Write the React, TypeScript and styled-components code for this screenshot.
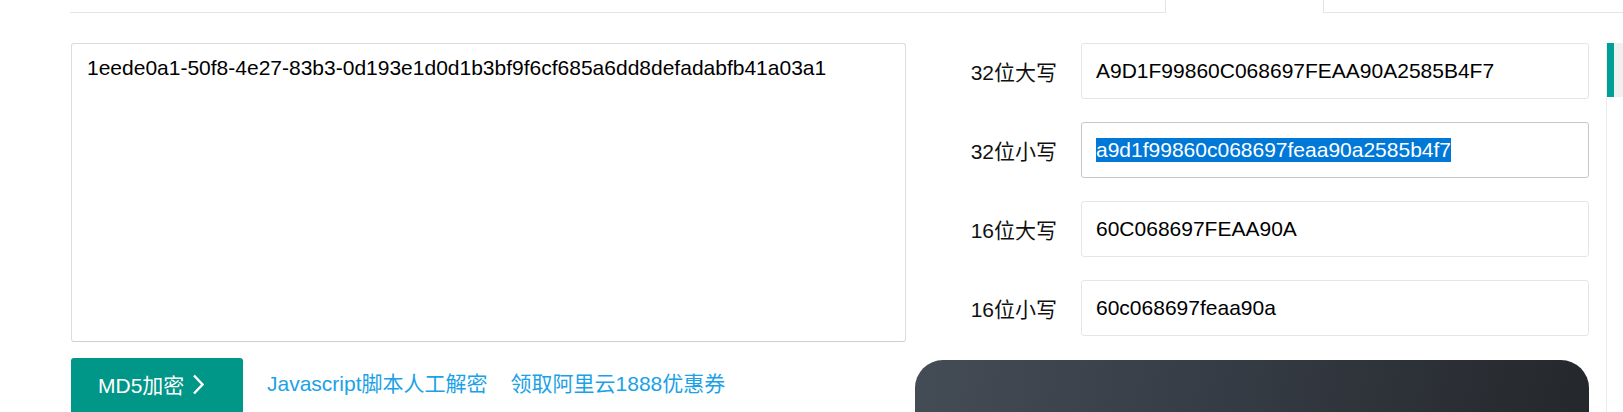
import styled, { createGlobalStyle } from "styled-components";

const GlobalStyle = createGlobalStyle`
  html, body {
    margin: 0;
    padding: 0;
    background: #fff;
    overflow: hidden;
  }
  body {
    font-family: "Liberation Sans", "Noto Sans CJK SC", sans-serif;
    color: #111;
  }
`;

const Page = styled.div`
  width: 1623px;
  height: 412px;
  overflow: hidden;
`;

const TabStrip = styled.div`
  display: flex;
  height: 13px;
`;
const TabBox = styled.div<{ $side: "left" | "right" }>`
  box-sizing: border-box;
  height: 13px;
  border-bottom: 1px solid #e4e4e4;
  ${(p) =>
    p.$side === "left"
      ? "width: 1096px; margin-left: 70px; border-right: 1px solid #e4e4e4;"
      : "flex: 1; border-left: 1px solid #e4e4e4;"}
`;
const ActiveTab = styled.div`
  width: 157px;
`;

const Main = styled.div`
  display: flex;
  padding-top: 30px;
`;

const LeftCol = styled.div`
  width: 835px;
  margin-left: 71px;
`;
const Source = styled.div`
  box-sizing: border-box;
  height: 299px;
  border: 1px solid #dcdcdc;
  border-bottom-color: #cfcfcf;
  border-radius: 3px;
  padding: 8px 15px;
  font-size: 21px;
  line-height: 31px;
  color: #000;
`;
const Actions = styled.div`
  display: flex;
  align-items: flex-start;
  margin-top: 16px;
`;
const EncryptBtn = styled.button`
  box-sizing: border-box;
  display: flex;
  align-items: center;
  width: 172px;
  height: 56px;
  padding: 0 0 4px 27px;
  border: none;
  border-radius: 3px 3px 0 0;
  background: #009688;
  color: #fff;
  font-family: inherit;
  font-size: 21px;
  cursor: pointer;
  svg {
    margin-left: 8px;
  }
`;
const LinkRow = styled.div`
  display: flex;
  gap: 23px;
  margin-left: 24px;
`;
const Link = styled.a`
  font-size: 21px;
  line-height: 52px;
  color: #1ba2e6;
  text-decoration: none;
`;

const RightCol = styled.div`
  width: 674px;
  margin-left: 9px;
  display: flex;
  flex-direction: column;
  gap: 23px;
`;
const Row = styled.div`
  display: flex;
  align-items: center;
  height: 56px;
`;
const Label = styled.div`
  width: 142px;
  text-align: right;
  font-size: 21px;
  color: #111;
`;
const Field = styled.div<{ $focus?: boolean }>`
  box-sizing: border-box;
  flex: 1;
  height: 56px;
  margin-left: 24px;
  display: flex;
  align-items: center;
  padding-left: 14px;
  border: 1px solid ${(p) => (p.$focus ? "#c6c6c6" : "#e6e6e6")};
  border-radius: 3px;
  font-size: 21px;
  color: #000;
`;
const Selected = styled.span`
  background: #0078d7;
  color: #fff;
`;
const AdCard = styled.div`
  margin-top: 1px;
  height: 80px;
  border-radius: 28px 28px 0 0;
  background: linear-gradient(100deg, #444c56 0%, #363c45 45%, #24272b 100%);
`;

const SideRail = styled.div`
  flex: 1;
  margin-left: 17px;
  height: 400px;
  border-left: 1px solid #ececec;
  display: flex;
  align-items: flex-start;
`;
const RailTrack = styled.div`
  flex: 1;
  height: 54px;
  background: #f0f0f0;
  border-left: 7px solid #00a096;
`;

const results = [
  { label: "32位大写", value: "A9D1F99860C068697FEAA90A2585B4F7" },
  { label: "32位小写", value: "a9d1f99860c068697feaa90a2585b4f7", focus: true },
  { label: "16位大写", value: "60C068697FEAA90A" },
  { label: "16位小写", value: "60c068697feaa90a" },
];

function Chevron() {
  return (
    <svg width="12" height="21" viewBox="0 0 12 21" fill="none">
      <polyline points="2,1.5 10.5,10.5 2,19.5" stroke="#fff" strokeWidth="2.4" />
    </svg>
  );
}

export default function App() {
  return (
    <Page>
      <GlobalStyle />
      <TabStrip>
        <TabBox $side="left" />
        <ActiveTab />
        <TabBox $side="right" />
      </TabStrip>
      <Main>
        <LeftCol>
          <Source>1eede0a1-50f8-4e27-83b3-0d193e1d0d1b3bf9f6cf685a6dd8defadabfb41a03a1</Source>
          <Actions>
            <EncryptBtn>
              MD5加密
              <Chevron />
            </EncryptBtn>
            <LinkRow>
              <Link href="#">Javascript脚本人工解密</Link>
              <Link href="#">领取阿里云1888优惠券</Link>
            </LinkRow>
          </Actions>
        </LeftCol>
        <RightCol>
          {results.map((r) => (
            <Row key={r.label}>
              <Label>{r.label}</Label>
              <Field $focus={r.focus}>
                {r.focus ? <Selected>{r.value}</Selected> : r.value}
              </Field>
            </Row>
          ))}
          <AdCard />
        </RightCol>
        <SideRail>
          <RailTrack />
        </SideRail>
      </Main>
    </Page>
  );
}
